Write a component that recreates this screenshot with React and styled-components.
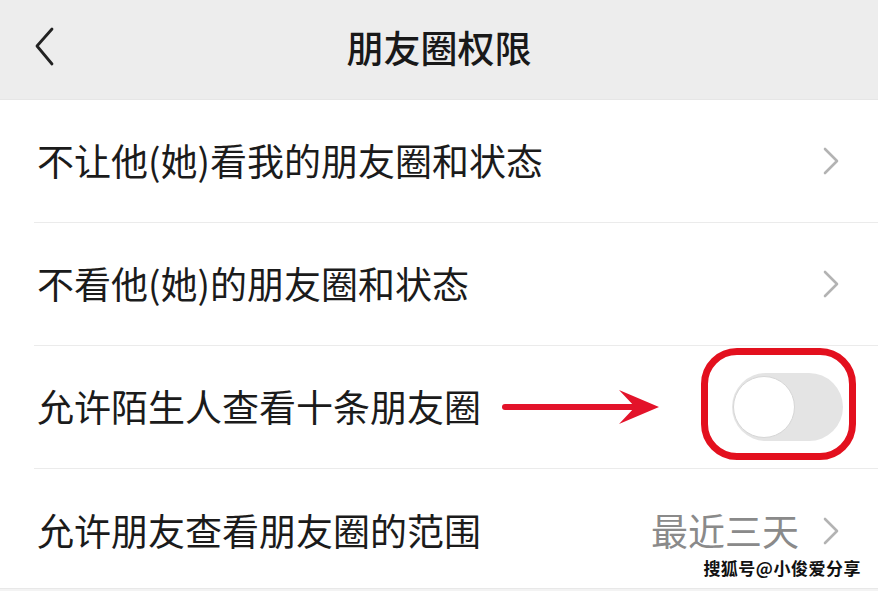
import React, { useState } from "react";
import styled, { createGlobalStyle } from "styled-components";

const GlobalStyle = createGlobalStyle`
  html, body {
    margin: 0;
    padding: 0;
    background: #ffffff;
  }
  body {
    font-family: "Noto Sans CJK SC", "Noto Sans", sans-serif;
  }
`;

const Page = styled.div`
  position: relative;
  width: 878px;
  height: 591px;
  overflow: hidden;
  background: #f3f3f3;
`;

const Header = styled.div`
  height: 100px;
  background: #ededed;
  display: flex;
  align-items: center;
  justify-content: center;
  position: relative;
  border-bottom: 1px solid #e6e6e6;
  box-sizing: border-box;
`;

const BackButton = styled.div`
  position: absolute;
  left: 33px;
  top: 27px;
  width: 22px;
  height: 40px;
  display: flex;
`;

const Title = styled.div`
  font-size: 37px;
  font-weight: 500;
  color: #191919;
  margin-top: -6px;
`;

const List = styled.div`
  display: flex;
  flex-direction: column;
  background: #ffffff;
  border-bottom: 1px solid #e8e8e8;
`;

const Row = styled.div`
  position: relative;
  height: ${(p) => (p.$last ? "119px" : "122px")};
  margin-left: 34px;
  padding-left: 3px;
  padding-right: ${(p) => (p.$switch ? "35px" : "39px")};
  display: flex;
  align-items: center;
  justify-content: space-between;
  border-bottom: ${(p) => (p.$last ? "none" : "1px solid #ebebeb")};
`;

const Label = styled.div`
  font-size: 37px;
  color: #1b1b1b;
  margin-top: ${(p) => (p.$last ? "2px" : "-2px")};
`;

const Right = styled.div`
  display: flex;
  align-items: center;
  gap: 24px;
  margin-top: 4px;
`;

const Value = styled.div`
  font-size: 37px;
  color: #8a8a8a;
  margin-top: -2px;
`;

const Track = styled.div`
  position: relative;
  width: 111px;
  height: 68px;
  border-radius: 34px;
  background: ${(p) => (p.$on ? "#07c160" : "#e4e4e4")};
  cursor: pointer;
`;

const Knob = styled.div`
  position: absolute;
  top: 3px;
  left: ${(p) => (p.$on ? "46px" : "1px")};
  width: 60px;
  height: 60px;
  border-radius: 50%;
  background: #ffffff;
  border: 1px solid #d6d6d6;
`;

const Highlight = styled.div`
  position: absolute;
  left: -31px;
  top: -25px;
  width: 141px;
  height: 98px;
  border: 7px solid #e3101e;
  border-radius: 36px;
  pointer-events: none;
`;

const SwitchWrap = styled.div`
  position: relative;
`;

const Arrow = styled.svg`
  position: absolute;
  left: 467px;
  top: 40px;
  width: 160px;
  height: 40px;
`;

const Watermark = styled.div`
  position: absolute;
  right: 17px;
  bottom: 11px;
  font-size: 17px;
  font-weight: 700;
  color: #111111;
  letter-spacing: 0.5px;
  text-shadow: 0 0 2px #ffffff, 0 0 2px #ffffff, 1px 1px 0 #ffffff;
`;

const Chevron = () => (
  <svg width="16" height="28" viewBox="0 0 16 28">
    <path
      d="M2 2 L14 14 L2 26"
      fill="none"
      stroke="#b3b3b3"
      strokeWidth="2.6"
      strokeLinecap="round"
      strokeLinejoin="round"
    />
  </svg>
);

export default function App() {
  const [on, setOn] = useState(false);

  return (
    <Page>
      <GlobalStyle />
      <Header>
        <BackButton>
          <svg width="22" height="40" viewBox="0 0 22 40">
            <path
              d="M19 2 L4 19 L19 37"
              fill="none"
              stroke="#222222"
              strokeWidth="2.8"
              strokeLinecap="round"
              strokeLinejoin="round"
            />
          </svg>
        </BackButton>
        <Title>朋友圈权限</Title>
      </Header>
      <List>
        <Row>
          <Label>不让他(她)看我的朋友圈和状态</Label>
          <Chevron />
        </Row>
        <Row>
          <Label>不看他(她)的朋友圈和状态</Label>
          <Chevron />
        </Row>
        <Row $switch>
          <Label>允许陌生人查看十条朋友圈</Label>
          <Arrow viewBox="0 0 160 40">
            <path
              d="M4 21 L148 21"
              stroke="#e3132a"
              strokeWidth="6"
              strokeLinecap="round"
            />
            <path d="M118 4 L158 21 L118 38 L134 21 Z" fill="#e3132a" />
          </Arrow>
          <SwitchWrap>
            <Track $on={on} onClick={() => setOn(!on)}>
              <Knob $on={on} />
            </Track>
            <Highlight />
          </SwitchWrap>
        </Row>
        <Row $last>
          <Label $last>允许朋友查看朋友圈的范围</Label>
          <Right>
            <Value>最近三天</Value>
            <Chevron />
          </Right>
        </Row>
      </List>
      <Watermark>搜狐号@小俊爱分享</Watermark>
    </Page>
  );
}
